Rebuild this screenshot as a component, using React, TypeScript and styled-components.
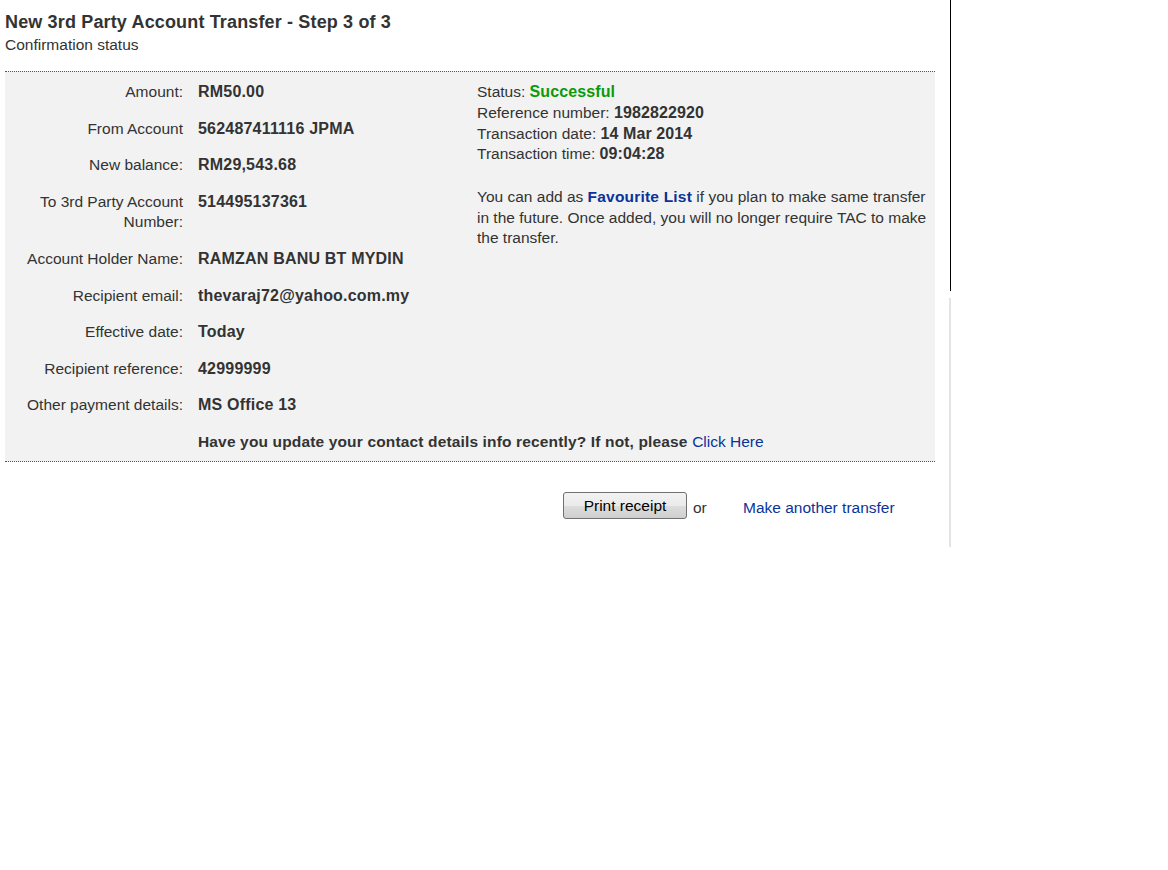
import styled, { createGlobalStyle } from 'styled-components';

const GlobalStyle = createGlobalStyle`
  html, body {
    margin: 0;
    padding: 0;
    background: #fff;
  }
  body {
    font-family: Arial, 'Liberation Sans', sans-serif;
    color: #333;
  }
`;

const Page = styled.div`
  display: flex;
  align-items: flex-start;
`;

const Main = styled.div`
  width: 930px;
  padding: 11px 15px 0 5px;
`;

const Edge = styled.div`
  display: flex;
  flex-direction: column;
  align-items: flex-start;
  gap: 7px;
`;

const EdgeLine = styled.div<{ $dark?: boolean; $h: number }>`
  width: ${(p) => (p.$dark ? 1 : 2)}px;
  height: ${(p) => p.$h}px;
  margin-left: ${(p) => (p.$dark ? 0 : -1)}px;
  background: ${(p) => (p.$dark ? '#000' : '#e4e4e4')};
`;

const Title = styled.h1`
  margin: 0;
  font-size: 18px;
  letter-spacing: 0.15px;
  line-height: 23px;
  font-weight: bold;
  color: #333;
`;

const Subtitle = styled.div`
  font-size: 15.5px;
  line-height: 22px;
  margin-bottom: 15px;
`;

const Panel = styled.div`
  border-top: 1px dotted #555;
  border-bottom: 1px dotted #555;
  background: #f2f2f2;
  padding: 2px 0 0;
  display: flex;
  font-size: 15.5px;
`;

const Details = styled.div`
  width: 472px;
  flex: none;
  display: grid;
  grid-template-columns: 163px 1fr;
  column-gap: 15px;
  padding-left: 15px;
  box-sizing: border-box;
`;

const Label = styled.div`
  text-align: right;
  padding: 8px 0;
  line-height: 20.6px;
`;

const Value = styled.div<{ $wide?: boolean }>`
  padding: 8px 0;
  line-height: 20.6px;
  font-weight: bold;
  font-size: ${(p) => (p.$wide ? 15.5 : 16)}px;
  letter-spacing: ${(p) => (p.$wide ? 0.15 : 0.2)}px;
  white-space: ${(p) => (p.$wide ? 'nowrap' : 'normal')};
`;

const Side = styled.div`
  padding: 8px 0 0;
  line-height: 20.8px;
  width: 456px;
`;

const Line = styled.div``;

const Strong = styled.b<{ $color?: string }>`
  color: ${(p) => p.$color || '#333'};
  font-size: 16px;
  letter-spacing: 0.1px;
`;

const Note = styled.p`
  margin: 22px 0 0;
  line-height: 20.5px;
`;

const Link = styled.a<{ $bold?: boolean }>`
  color: #0a3399;
  text-decoration: none;
  font-weight: ${(p) => (p.$bold ? 'bold' : 'normal')};
  font-size: 15.5px;
  letter-spacing: ${(p) => (p.$bold ? '0.2px' : '0')};
  cursor: pointer;
`;

const Actions = styled.div`
  display: flex;
  align-items: center;
  padding: 30px 0 0 558px;
  font-size: 15.5px;
`;

const PrintButton = styled.button`
  height: 27px;
  width: 124px;
  border: 1px solid #707070;
  border-radius: 3px;
  background: linear-gradient(#f2f2f2 0%, #ebebeb 50%, #dddddd 51%, #cfcfcf 100%);
  font-family: Arial, 'Liberation Sans', sans-serif;
  font-size: 15.5px;
  color: #000;
  padding: 1px 0 0;
`;

const Or = styled.span`
  margin: 6px 0 0 6px;
  width: 50px;
`;

const AnotherLink = styled(Link)`
  margin-top: 6px;
`;

const rows: { label: string; value: string }[] = [
  { label: 'Amount:', value: 'RM50.00' },
  { label: 'From Account', value: '562487411116 JPMA' },
  { label: 'New balance:', value: 'RM29,543.68' },
  { label: 'To 3rd Party Account Number:', value: '514495137361' },
  { label: 'Account Holder Name:', value: 'RAMZAN BANU BT MYDIN' },
  { label: 'Recipient email:', value: 'thevaraj72@yahoo.com.my' },
  { label: 'Effective date:', value: 'Today' },
  { label: 'Recipient reference:', value: '42999999' },
  { label: 'Other payment details:', value: 'MS Office 13' },
];

export default function App() {
  return (
    <>
      <GlobalStyle />
      <Page>
        <Main>
          <Title>New 3rd Party Account Transfer - Step 3 of 3</Title>
          <Subtitle>Confirmation status</Subtitle>
          <Panel>
            <Details>
              {rows.map((r) => (
                <>
                  <Label key={r.label}>{r.label}</Label>
                  <Value key={r.label + '-v'}>{r.value}</Value>
                </>
              ))}
              <Label />
              <Value $wide>
                Have you update your contact details info recently? If not, please{' '}
                <Link>Click Here</Link>
              </Value>
            </Details>
            <Side>
              <Line>
                Status: <Strong $color="#0a9a0a">Successful</Strong>
              </Line>
              <Line>
                Reference number: <Strong>1982822920</Strong>
              </Line>
              <Line>
                Transaction date: <Strong>14 Mar 2014</Strong>
              </Line>
              <Line>
                Transaction time: <Strong>09:04:28</Strong>
              </Line>
              <Note>
                You can add as <Link $bold>Favourite List</Link> if you plan to make same transfer
                in the future. Once added, you will no longer require TAC to make the transfer.
              </Note>
            </Side>
          </Panel>
          <Actions>
            <PrintButton>Print receipt</PrintButton>
            <Or>or</Or>
            <AnotherLink>Make another transfer</AnotherLink>
          </Actions>
        </Main>
        <Edge>
          <EdgeLine $dark $h={291} />
          <EdgeLine $h={249} />
        </Edge>
      </Page>
    </>
  );
}
